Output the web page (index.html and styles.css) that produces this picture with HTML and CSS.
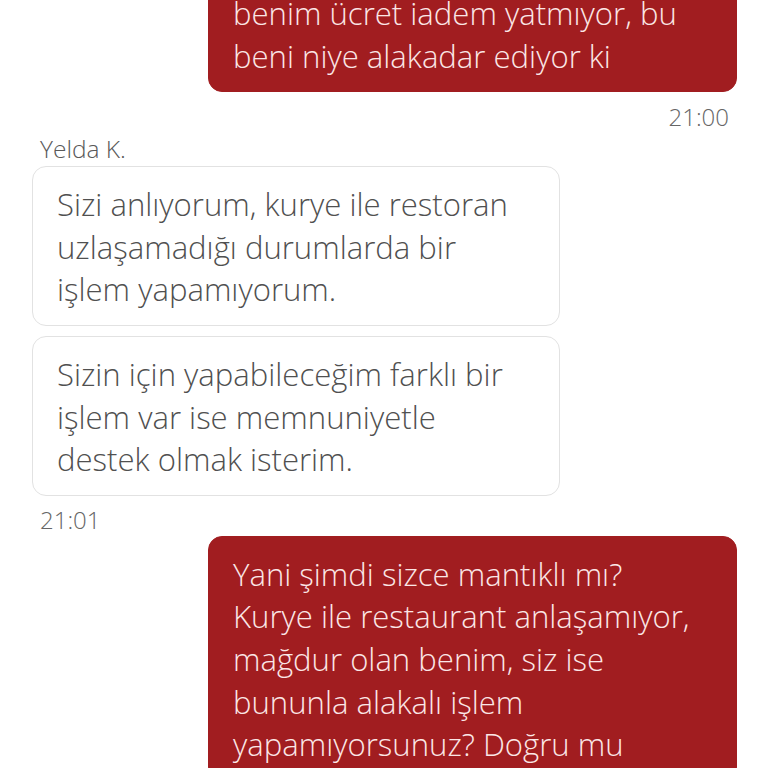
FILE: index.html
```html
<!DOCTYPE html>
<html lang="tr">
<head>
<meta charset="utf-8">
<title>Sohbet</title>
<link rel="stylesheet" href="styles.css">
</head>
<body>
<div class="chat">
  <div class="bubble out first">benim ücret iadem yatmıyor, bu<br>beni niye alakadar ediyor ki</div>
  <div class="time right">21:00</div>
  <div class="name">Yelda K.</div>
  <div class="bubble in">Sizi anlıyorum, kurye ile restoran<br>uzlaşamadığı durumlarda bir<br>işlem yapamıyorum.</div>
  <div class="bubble in second">Sizin için yapabileceğim farklı bir<br>işlem var ise memnuniyetle<br>destek olmak isterim.</div>
  <div class="time left">21:01</div>
  <div class="bubble out">Yani şimdi sizce mantıklı mı?<br>Kurye ile restaurant anlaşamıyor,<br>mağdur olan benim, siz ise<br>bununla alakalı işlem<br>yapamıyorsunuz? Doğru mu</div>
</div>
</body>
</html>
```

FILE: styles.css
```css
html, body {
  margin: 0;
  padding: 0;
  background: #ffffff;
  overflow: hidden;
}

.chat {
  display: flex;
  flex-direction: column;
  padding: 0 31px 0 32px;
  font-family: "Open Sans", "Noto Sans", sans-serif;
}

.bubble {
  width: 528px;
  box-sizing: border-box;
  font-size: 31.1px;
  font-weight: 300;
  line-height: 42.6px;
  border-radius: 14px;
  white-space: nowrap;
  padding: 16px 24px 14px 24px;
}

.bubble.in {
  align-self: flex-start;
  background: #ffffff;
  color: #505050;
  border: 1px solid #e2e2e2;
}

.bubble.in.second {
  margin-top: 10px;
}

.bubble.out {
  align-self: flex-end;
  width: 529px;
  background: #a11d20;
  color: #fbe6e6;
  border: 1px solid #a11d20;
}

.bubble.out.first {
  margin-top: -25px;
}

.time {
  font-size: 24px;
  font-weight: 300;
  line-height: 30px;
  color: #666666;
}

.time.right {
  align-self: flex-end;
  margin: 10px 8px 0 0;
}

.time.left {
  align-self: flex-start;
  margin: 9px 0 1px 8px;
}

.name {
  font-size: 24.5px;
  font-weight: 300;
  line-height: 28px;
  color: #595959;
  margin: 3px 0 3px 8px;
}
```
